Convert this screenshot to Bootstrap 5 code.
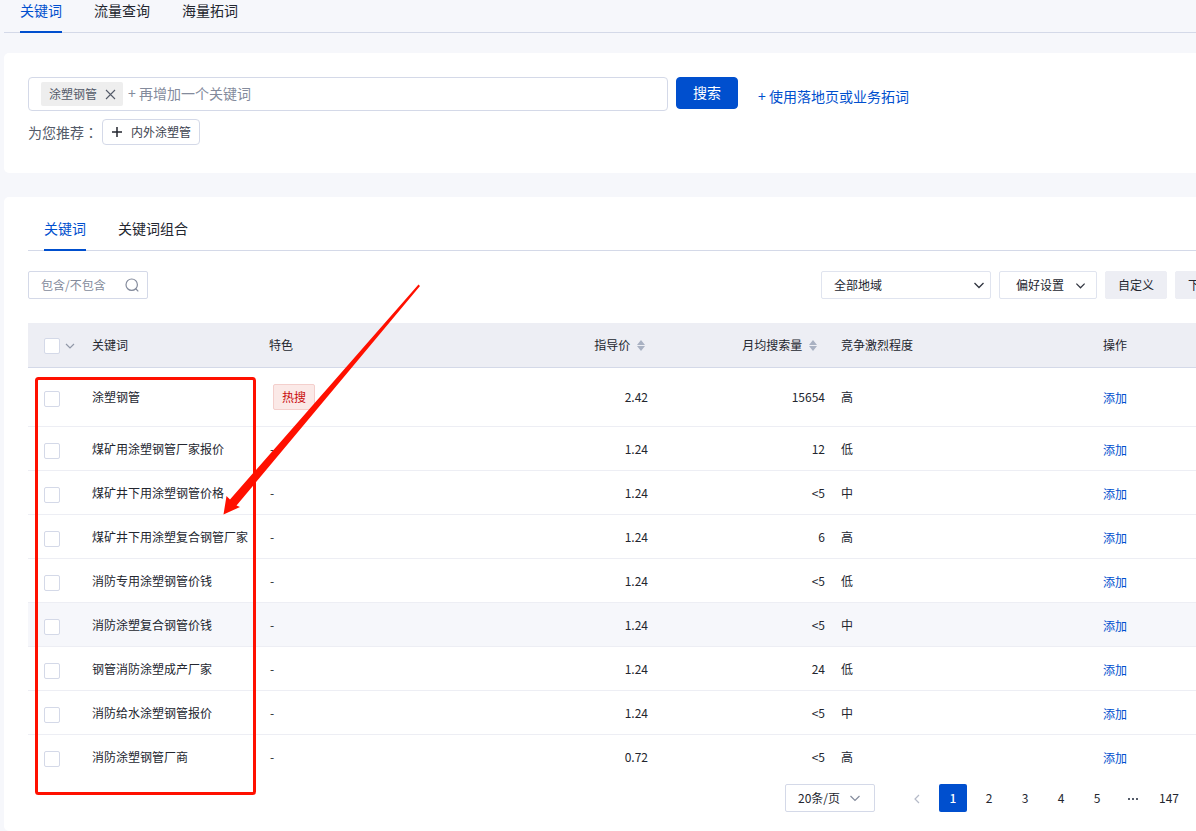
<!DOCTYPE html>
<html lang="zh-CN">
<head>
<meta charset="utf-8">
<meta name="viewport" content="width=device-width, initial-scale=1">
<title>关键词</title>
<link rel="stylesheet" href="https://cdn.jsdelivr.net/npm/bootstrap@5.3.0/dist/css/bootstrap.min.css">
<style>
  :root { --brand: #004fce; --line: #d4d9e8; --soft: #edeef4; --ink: #23262f; --muted: #848b9c; }
  body { font-family: "Noto Sans CJK SC", sans-serif; font-size: 12px; line-height: 20px; color: var(--ink); background: #f6f7fb; overflow: hidden; }
  /* the workspace runs wider than the viewport, its right edge is clipped */
  .workspace { width: calc(100% + 53px); min-height: 100vh; padding-left: 4px; }
  a { color: var(--brand); text-decoration: none; }
  .line-tabs { gap: 32px; padding: 0 16px; border-bottom: 1px solid var(--line); flex-wrap: nowrap; }
  .line-tabs .nav-link { padding: 0 0 10px; font-size: 14px; line-height: 21px; color: var(--ink); border-bottom: 2px solid transparent; margin-bottom: -1px; }
  .line-tabs .nav-link.active { color: var(--brand); border-color: var(--brand); }
  .search-panel { margin-top: 20px; }
  .panel { background: #fff; border-radius: 5px; padding: 24px 24px 28px; }
  .result-panel { padding-top: 21px; }
  .tag-field { width: 640px; height: 34px; border: 1px solid var(--line); border-radius: 4px; padding: 0 12px; gap: 5px; }
  .tag-chip { height: 24px; padding: 0 7px 0 8px; gap: 8px; background: #eee; border-radius: 2px; color: #545b69; }
  .tag-chip button, .tag-field input { border: 0; background: none; padding: 0; }
  .tag-chip button { width: 11px; line-height: 0; color: #545b69; }
  .tag-field input { font-size: 14px; line-height: 20px; padding-bottom: 2px; outline: 0; min-width: 0; }
  ::placeholder { color: var(--muted) !important; opacity: 1; }
  .btn { --bs-btn-font-size: 12px; --bs-btn-line-height: 18px; --bs-btn-border-radius: 2px; }
  .btn-search { --bs-btn-font-size: 14px; --bs-btn-border-radius: 4px; --bs-btn-bg: var(--brand); --bs-btn-border-color: var(--brand); width: 62px; height: 32px; padding: 0 0 2px; }
  .btn-suggest { --bs-btn-color: #3d4350; --bs-btn-border-color: var(--line); --bs-btn-border-radius: 4px; height: 26px; padding: 0 8px; gap: 8px; }
  .hint-link, .hint-label { font-size: 14px; line-height: 26px; }
  .hint-link { margin: 6px 0 0 20px; }
  .hint-label { color: #545b69; }
  .hint-label .colon { font-family: "Noto Sans CJK TC", sans-serif; }
  .tool { height: 28px; border: 1px solid #e0e4ef; border-radius: 2px; font-size: 12px; line-height: 18px; color: var(--ink); background-color: #fff; }
  .btn-soft { background: var(--soft); border-color: var(--soft); padding: 0 12px; }
  .btn-pref { width: 98px; padding: 0 10px 0 16px; }
  .filter-row { margin: 20px 0 24px; }
  .filter-box { width: 120px; border-color: var(--line); padding: 0 8px 0 12px; color: var(--muted); }
  .filter-box input { width: 80px; border: 0; outline: 0; padding: 0; }
  select.tool { padding: 0 12px; background-size: 12px 12px; background-position: right 5px center; background-image: url("data:image/svg+xml,%3Csvg xmlns='http://www.w3.org/2000/svg' viewBox='0 0 12 12'%3E%3Cpath d='M1.5 4 6 8.500 10.500 4' fill='none' stroke='%2330343f' stroke-width='1.300'/%3E%3C/svg%3E"); }
  .region-select { width: 170px; }
  select.size-select { width: 90px; margin-right: 28px; border-color: var(--line); background-position: right 13px center; background-image: url("data:image/svg+xml,%3Csvg xmlns='http://www.w3.org/2000/svg' viewBox='0 0 12 12'%3E%3Cpath d='M1.500 4 6 8.500 10.500 4' fill='none' stroke='%23848b9c' stroke-width='1.200'/%3E%3C/svg%3E"); }
  .words { table-layout: fixed; --bs-table-bg: transparent; color: var(--ink); }
  .words > :not(caption) > * > * { height: 44px; padding: 2px 8px 0; vertical-align: middle; font-weight: 400; border-bottom: 1px solid var(--soft); color: inherit; }
  .words > thead > tr > th { height: 44px; padding-top: 0; background: var(--soft); border-color: var(--line); white-space: nowrap; }
  .words > tbody { border-top: 0; }
  .words > tbody > tr:first-child > td { height: 59px; padding-top: 0; }
  .words > tbody > tr:last-child > td { border-bottom-color: transparent; }
  .words > tbody > tr > td:nth-child(3) { padding-left: 9px; }
  .words > tbody > tr.hovered { background: #f6f7fb; }
  .words > * > tr > :first-child { padding-left: 16px; }
  .words > tbody a, .words > tbody .form-check-input { position: relative; top: 1px; }
  .words .form-check-input { display: block; width: 16px; height: 16px; margin: 2px 0 0; border: 1px solid var(--line); border-radius: 2px; }
  .sort { width: 8px; height: 11px; margin-left: 4px; vertical-align: -1px; fill: #a9b1c2; }
  .sort-price { margin-right: 3px; }
  .sort-volume { margin-right: 8px; }
  .hot-tag { display: inline-block; margin-left: 3px; padding: 2px 8px; border: 1px solid #f4cfcc; border-radius: 2px; background: #fbe9e7; color: #c90d0d; }
  .pager-row { padding: 5px 6px 0 0; }
  .pager { gap: 8px; }
  .pager .page-item .page-link { min-width: 28px; height: 28px; margin: 0; padding: 0 4px; border: 0; border-radius: 2px; font-size: 12px; line-height: 28px; text-align: center; color: var(--ink); background: none; }
  .pager .page-item.active .page-link { background: var(--brand); color: #fff; font-weight: 500; }
  .pager .page-item.disabled .page-link { color: #b5bac8; }
  .callout-mark { left: 0; top: 0; width: 440px; height: 610px; pointer-events: none; }
</style>
</head>
<body>
<div class="workspace d-flex flex-column">
  <nav class="nav line-tabs">
    <a class="nav-link active" href="#">关键词</a>
    <a class="nav-link" href="#">流量查询</a>
    <a class="nav-link" href="#">海量拓词</a>
  </nav>

  <section class="panel search-panel">
    <div class="d-flex align-items-start">
      <div class="tag-field d-flex align-items-center">
        <span class="tag-chip d-flex align-items-center flex-shrink-0">涂塑钢管
          <button type="button" aria-label="删除"><svg width="11" height="11" viewBox="0 0 11 11"><path d="M1 1l9 9M10 1l-9 9" stroke="currentColor" stroke-width="1.100"/></svg></button>
        </span>
        <input class="flex-fill" type="text" aria-label="添加关键词" placeholder="+ 再增加一个关键词">
      </div>
      <button class="btn btn-primary btn-search ms-2" type="button">搜索</button>
      <a class="hint-link" href="#">+ 使用落地页或业务拓词</a>
    </div>
    <div class="d-flex align-items-center mt-2">
      <span class="hint-label">为您推荐<span class="colon" lang="zh-TW">：</span></span>
      <button class="btn btn-suggest d-flex align-items-center ms-1" type="button">
        <svg width="12" height="12" viewBox="0 0 12 12"><path d="M6 1v10M1 6h10" stroke="#23262f" stroke-width="1.500"/></svg>内外涂塑管
      </button>
    </div>
  </section>

  <section class="panel result-panel position-relative flex-fill mt-4 pb-0">
    <nav class="nav line-tabs">
      <a class="nav-link active" href="#">关键词</a>
      <a class="nav-link" href="#">关键词组合</a>
    </nav>
    <div class="filter-row d-flex align-items-center gap-2">
      <div class="tool filter-box d-flex align-items-center justify-content-between me-auto">
        <input type="text" aria-label="包含/不包含" placeholder="包含/不包含">
        <svg width="14" height="14" viewBox="0 0 14 14" fill="none" stroke="currentColor" stroke-width="1.200"><circle cx="6.700" cy="6.700" r="5.700"/><path d="M10.500 10.500l2.800 2.800"/></svg>
      </div>
      <select class="form-select tool region-select" aria-label="地域"><option>全部地域</option></select>
      <button class="btn tool btn-pref d-flex align-items-center justify-content-between" type="button">偏好设置
        <svg width="11" height="11" viewBox="0 0 12 12"><path d="M1.500 4 6 8.500 10.500 4" fill="none" stroke="#30343f" stroke-width="1.300"/></svg>
      </button>
      <button class="btn tool btn-soft" type="button">自定义</button>
      <button class="btn tool btn-soft" type="button">下载</button>
    </div>

    <table class="table words mb-0">
      <colgroup><col style="width:56px"><col style="width:177px"><col><col style="width:177px"><col style="width:177px"><col style="width:262px"><col style="width:130px"></colgroup>
      <thead>
        <tr>
          <th><div class="d-flex align-items-center"><input class="form-check-input" type="checkbox" aria-label="全选"><svg class="flex-shrink-0 ms-1 mt-1" width="12" height="10" viewBox="0 0 12 10"><path d="M2 2l4 4 4-4" fill="none" stroke="#9198a8" stroke-width="1.200"/></svg></div></th>
          <th>关键词</th>
          <th>特色</th>
          <th class="text-end">指导价 <svg class="sort sort-price" viewBox="0 0 8 11"><path d="M4 0l4 5H0zM4 11l4-5H0z"/></svg></th>
          <th class="text-end">月均搜索量 <svg class="sort sort-volume" viewBox="0 0 8 11"><path d="M4 0l4 5H0zM4 11l4-5H0z"/></svg></th>
          <th>竞争激烈程度</th>
          <th>操作</th>
        </tr>
      </thead>
      <tbody>
        <tr><td><input class="form-check-input" type="checkbox" aria-label="选择"></td><td>涂塑钢管</td><td><span class="hot-tag">热搜</span></td><td class="text-end">2.42</td><td class="text-end">15654</td><td>高</td><td><a href="#">添加</a></td></tr>
        <tr><td><input class="form-check-input" type="checkbox" aria-label="选择"></td><td>煤矿用涂塑钢管厂家报价</td><td>-</td><td class="text-end">1.24</td><td class="text-end">12</td><td>低</td><td><a href="#">添加</a></td></tr>
        <tr><td><input class="form-check-input" type="checkbox" aria-label="选择"></td><td>煤矿井下用涂塑钢管价格</td><td>-</td><td class="text-end">1.24</td><td class="text-end">&lt;5</td><td>中</td><td><a href="#">添加</a></td></tr>
        <tr><td><input class="form-check-input" type="checkbox" aria-label="选择"></td><td>煤矿井下用涂塑复合钢管厂家</td><td>-</td><td class="text-end">1.24</td><td class="text-end">6</td><td>高</td><td><a href="#">添加</a></td></tr>
        <tr><td><input class="form-check-input" type="checkbox" aria-label="选择"></td><td>消防专用涂塑钢管价钱</td><td>-</td><td class="text-end">1.24</td><td class="text-end">&lt;5</td><td>低</td><td><a href="#">添加</a></td></tr>
        <tr class="hovered"><td><input class="form-check-input" type="checkbox" aria-label="选择"></td><td>消防涂塑复合钢管价钱</td><td>-</td><td class="text-end">1.24</td><td class="text-end">&lt;5</td><td>中</td><td><a href="#">添加</a></td></tr>
        <tr><td><input class="form-check-input" type="checkbox" aria-label="选择"></td><td>钢管消防涂塑成产厂家</td><td>-</td><td class="text-end">1.24</td><td class="text-end">24</td><td>低</td><td><a href="#">添加</a></td></tr>
        <tr><td><input class="form-check-input" type="checkbox" aria-label="选择"></td><td>消防给水涂塑钢管报价</td><td>-</td><td class="text-end">1.24</td><td class="text-end">&lt;5</td><td>中</td><td><a href="#">添加</a></td></tr>
        <tr><td><input class="form-check-input" type="checkbox" aria-label="选择"></td><td>消防涂塑钢管厂商</td><td>-</td><td class="text-end">0.72</td><td class="text-end">&lt;5</td><td>高</td><td><a href="#">添加</a></td></tr>
      </tbody>
    </table>

    <div class="pager-row d-flex justify-content-end">
      <select class="form-select tool size-select" aria-label="每页条数"><option>20条/页</option></select>
      <ul class="pagination pager mb-0">
        <li class="page-item disabled"><a class="page-link" href="#" aria-label="上一页"><svg width="10" height="10" viewBox="0 0 10 10"><path d="M7 1L3 5l4 4" fill="none" stroke="currentColor" stroke-width="1.200"/></svg></a></li>
        <li class="page-item active"><a class="page-link" href="#">1</a></li>
        <li class="page-item"><a class="page-link" href="#">2</a></li>
        <li class="page-item"><a class="page-link" href="#">3</a></li>
        <li class="page-item"><a class="page-link" href="#">4</a></li>
        <li class="page-item"><a class="page-link" href="#">5</a></li>
        <li class="page-item"><span class="page-link" aria-label="更多"><svg width="10" height="4" viewBox="0 0 10 4" fill="#545b69"><path d="M0 1h2v2H0zM4 1h2v2H4zM8 1h2v2H8z"/></svg></span></li>
        <li class="page-item"><a class="page-link" href="#">147</a></li>
        <li class="page-item"><a class="page-link" href="#" aria-label="下一页"><svg width="10" height="10" viewBox="0 0 10 10"><path d="M3 1l4 4-4 4" fill="none" stroke="currentColor" stroke-width="1.200"/></svg></a></li>
      </ul>
    </div>

    <!-- red annotation: frame round the keyword column and the arrow to it -->
    <svg class="callout-mark position-absolute" viewBox="4 197 440 610">
      <rect x="36.500" y="378.500" width="218" height="415" rx="2" fill="none" stroke="#ff1000" stroke-width="3"/>
      <path d="M418.500 284.500L230 499.500 226.500 496 223.500 514.500 240 507 236.500 505.500 420 286z" fill="#ff1000"/>
    </svg>
  </section>
</div>
<script src="https://cdn.jsdelivr.net/npm/bootstrap@5.3.0/dist/js/bootstrap.bundle.min.js"></script>
</body>
</html>
